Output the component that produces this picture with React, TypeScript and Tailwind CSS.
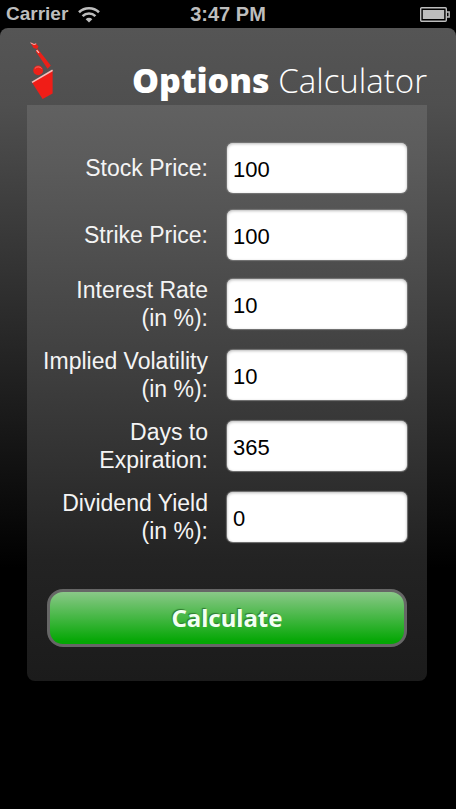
import { useState } from "react";

const FIELDS = [
  { id: "stock", lines: ["Stock Price:"], initial: "100" },
  { id: "strike", lines: ["Strike Price:"], initial: "100" },
  { id: "rate", lines: ["Interest Rate", "(in %):"], initial: "10" },
  { id: "volatility", lines: ["Implied Volatility", "(in %):"], initial: "10" },
  { id: "days", lines: ["Days to", "Expiration:"], initial: "365" },
  { id: "dividend", lines: ["Dividend Yield", "(in %):"], initial: "0" },
];

function WifiIcon() {
  return (
    <svg width="22" height="17" viewBox="0 0 22 17" fill="none" stroke="#bdbdbd" strokeWidth="2.6" aria-hidden="true">
      <path d="M1 6.2 A14.5 14.5 0 0 1 21 6.2" />
      <path d="M4.6 10.2 A9 9 0 0 1 17.4 10.2" />
      <path d="M11 16.6 L7.7 13.2 A4.4 4.4 0 0 1 14.3 13.2 Z" fill="#bdbdbd" stroke="none" />
    </svg>
  );
}

function BatteryIcon() {
  return (
    <svg width="30" height="15" viewBox="0 0 30 15" fill="none" aria-hidden="true">
      <rect x="0.7" y="0.7" width="25.6" height="13.6" rx="1" stroke="#bdbdbd" strokeWidth="1.4" />
      <rect x="2.8" y="3" width="21.4" height="9" fill="#bdbdbd" />
      <path d="M26.5 5 H29.2 V10 H26.5" stroke="#bdbdbd" strokeWidth="1.4" />
    </svg>
  );
}

function Logo() {
  return (
    <svg width="26" height="58" viewBox="0 0 26 58" aria-hidden="true">
      <path d="M0.5 0.5 L4 2 L6 1.5 L8.5 4.5 L7 7 L3.5 6 Z" fill="#ec2018" />
      <path d="M0.5 0.8 L4 2.5 L6.2 1.8" stroke="#f6b3ae" strokeWidth="1" fill="none" />
      <path d="M7.6 6.8 L20.8 23.6 L17.6 26.8 L5.8 9.4 Z" fill="#ec2018" />
      <path d="M6.6 8.2 L9 10.8" stroke="#f9c9c5" strokeWidth="1.2" />
      <circle cx="8.2" cy="28.4" r="4.9" fill="#ec2018" />
      <path d="M4.8 26.6 A4.2 4.2 0 0 1 11.6 26.6" stroke="#f0827b" strokeWidth="0.8" fill="none" />
      <path d="M2 40.6 L22.6 28.4 V51.6 L12.6 57 Z" fill="#f01d17" />
      <path d="M2 40.4 L22.6 28.2" stroke="#f7bcb8" strokeWidth="1.6" />
    </svg>
  );
}

export default function App() {
  const [values, setValues] = useState<Record<string, string>>(
    Object.fromEntries(FIELDS.map((f) => [f.id, f.initial])),
  );

  return (
    <div className="flex min-h-screen flex-col bg-black font-['Liberation_Sans',Arial,sans-serif] text-white">
      <header className="grid h-7 grid-cols-3 items-center px-1.5 text-[#bdbdbd]">
        <div className="flex items-center gap-2.5">
          <span className="text-[19px] font-bold">Carrier</span>
          <WifiIcon />
        </div>
        <span className="text-center text-xl font-bold whitespace-nowrap">3:47 PM</span>
        <div className="flex justify-end">
          <BatteryIcon />
        </div>
      </header>

      <main className="grow rounded-t-lg bg-[linear-gradient(180deg,#555_0px,#4f4f4f_77px,#000_540px)] pr-[29px] pl-[27px]">
        <div className="flex h-[77px] items-start justify-between">
          <div className="pt-3.5 pl-[3px]">
            <Logo />
          </div>
          <h1 className="pt-7 font-['Open_Sans','Noto_Sans',sans-serif] text-[33px] leading-12 font-light whitespace-nowrap">
            <b className="text-[34px] font-extrabold">Options</b> Calculator
          </h1>
        </div>

        <form
          className="rounded-b-lg bg-[linear-gradient(180deg,#616161_0%,#5b5b5b_10%,#434343_41%,#232323_79%,#1b1b1b_100%)] px-5 pt-[37px] pb-[34px]"
          onSubmit={(e) => e.preventDefault()}
        >
          <div className="flex flex-col gap-[15px]">
            {FIELDS.map((f) => (
              <div key={f.id} className="flex min-h-[52px] items-center gap-[19px]">
                <label htmlFor={f.id} className="-ml-2 flex-1 text-right text-[23px] leading-7 whitespace-nowrap text-[#f4f4f4]">
                  {f.lines.map((line) => (
                    <span key={line} className="block">
                      {line}
                    </span>
                  ))}
                </label>
                <input
                  id={f.id}
                  type="text"
                  inputMode="decimal"
                  value={values[f.id]}
                  onChange={(e) => setValues({ ...values, [f.id]: e.target.value })}
                  className="h-[50px] w-1/2 rounded-md bg-white px-1.5 pt-1 text-[22px] text-black shadow-[inset_0_1px_3px_#bbb,0_0_1px_1px_#777] outline-none"
                />
              </div>
            ))}
          </div>
          <button
            type="submit"
            className="mt-11 h-[58px] w-full rounded-2xl border-3 border-[#666] bg-[linear-gradient(180deg,#8ac888,#04a704_95%)] font-['Noto_Sans','Open_Sans',sans-serif] text-2xl font-bold text-[#f2fff2] [text-shadow:-1px_-1px_1px_#2f7a2f]"
          >
            Calculate
          </button>
        </form>
      </main>
    </div>
  );
}
